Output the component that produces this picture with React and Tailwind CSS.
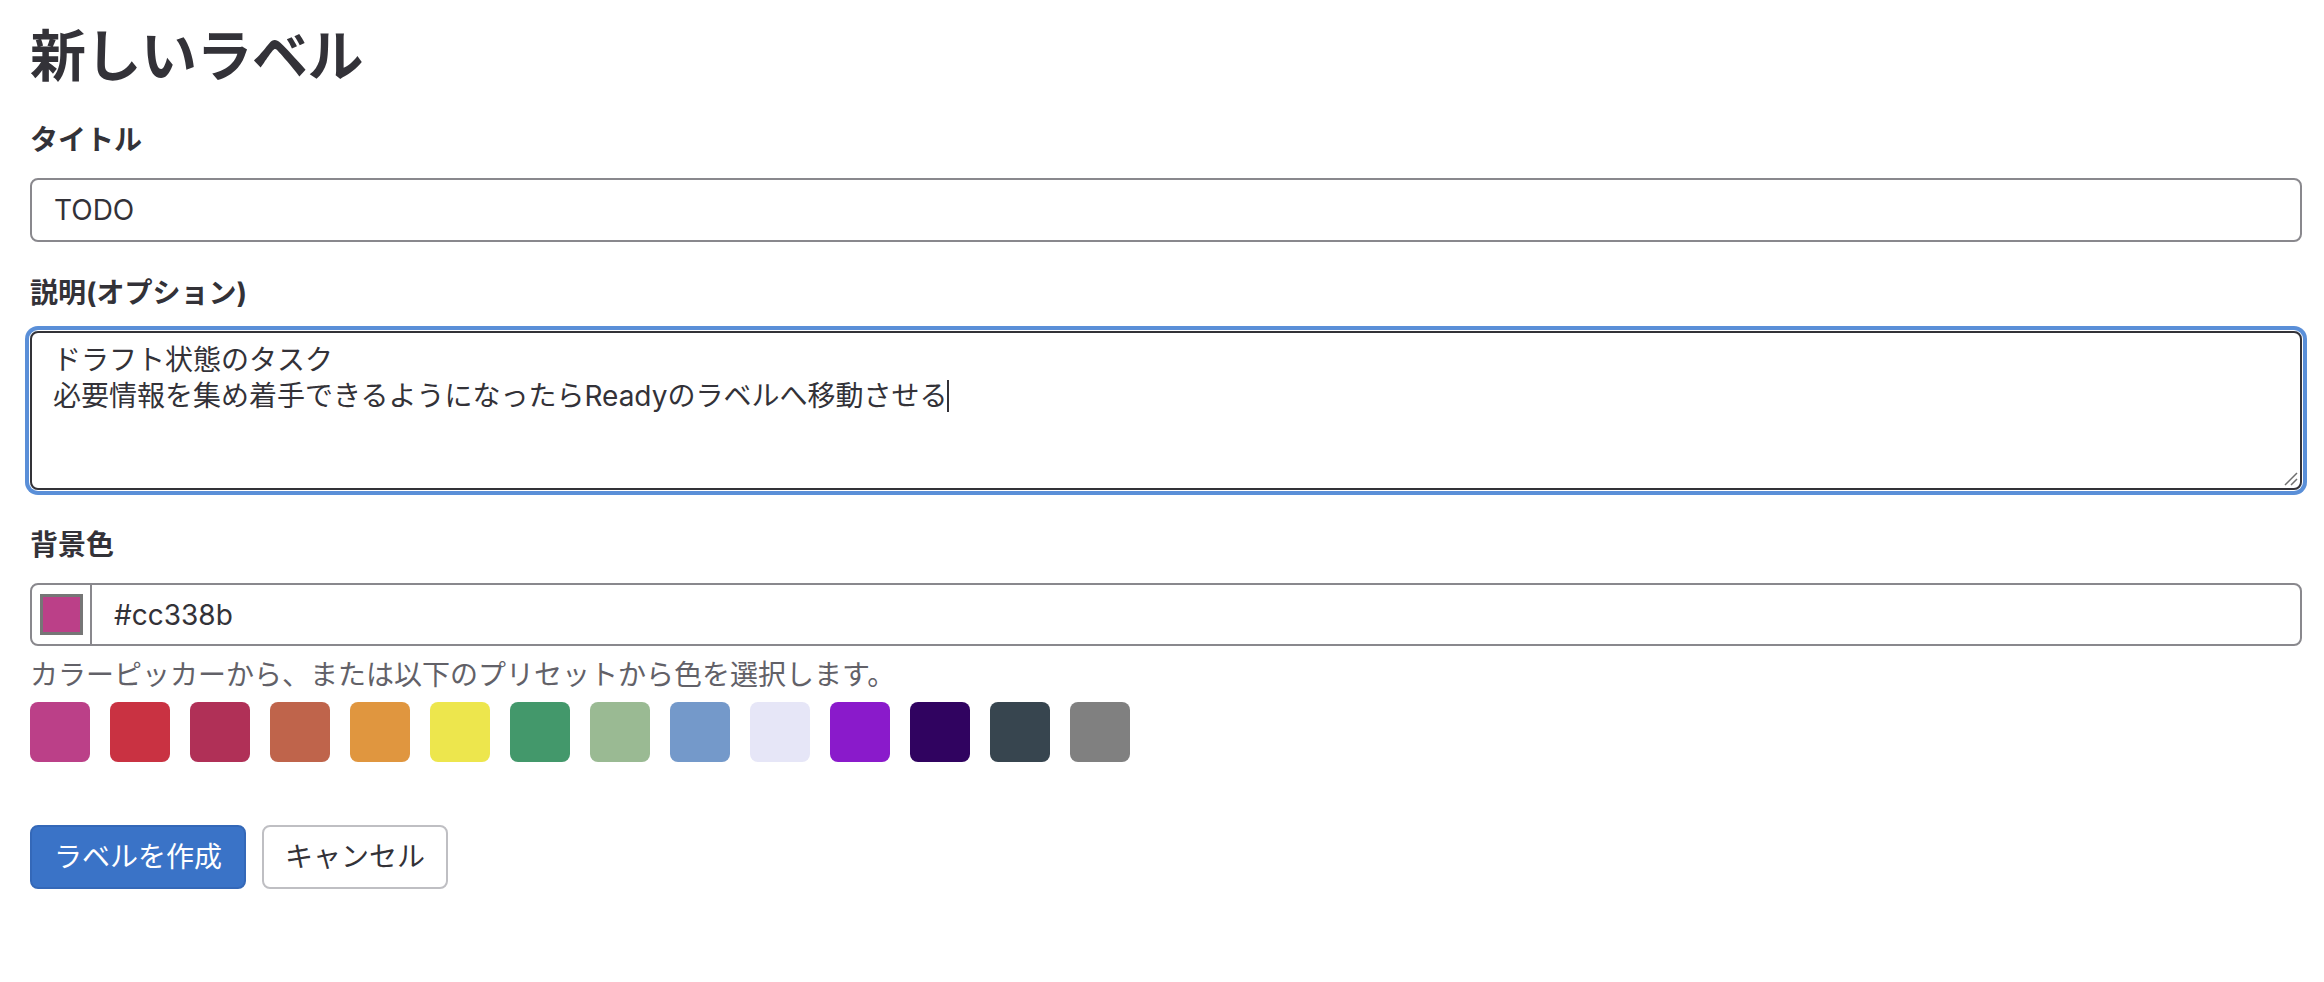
import React, { useState } from 'react';

const PRESETS = [
    '#bb4088', '#c93242', '#b03057', '#bf644b', '#e0963f', '#ede64d', '#43986b',
    '#9aba93', '#7499ca', '#e6e6f7', '#8a1acb', '#300360', '#37454f', '#808080',
];

const font = "font-['Inter','Noto_Sans_CJK_JP',sans-serif]";

const Label = ({ children }) => (
    <div className="h-[40px] leading-[40px] text-[28px] font-bold text-[#333238] mb-[18px]">{children}</div>
);

const App = () => {
    const [color, setColor] = useState('#cc338b');

    return (
        <div className={`${font} bg-white min-h-[982px] pl-[30px] pr-[22px] pt-[20px] text-[#333238]`}>
            <h1 className="h-[72px] leading-[72px] text-[56px] font-bold tracking-[-0.5px]">新しいラベル</h1>

            <div className="mt-[28px]">
                <Label>タイトル</Label>
                <div className="h-[64px] border-2 border-[#89888d] rounded-[8px] px-[22px] flex items-center text-[28px]">
                    TODO
                </div>
            </div>

            <div className="mt-[31px]">
                <Label>説明(オプション)</Label>
                <div className="relative h-[159px] border-2 border-[#333238] rounded-[8px] px-[21px] py-[9px] text-[28px] leading-[36px] shadow-[0_0_0_1px_#fff,0_0_0_5px_#5a8fd8]">
                    <div>ドラフト状態のタスク</div>
                    <div className="flex items-center">
                        必要情報を集め着手できるようになったらReadyのラベルへ移動させる
                        <span className="inline-block w-[2px] h-[32px] bg-[#333238]"></span>
                    </div>
                    {/* resize grip */}
                    <svg className="absolute right-[2px] bottom-[2px]" width="18" height="18" viewBox="0 0 18 18">
                        <path d="M17 5 L5 17 M17 11 L11 17" stroke="#6f6f6f" strokeWidth="1.5" fill="none" />
                    </svg>
                </div>
            </div>

            <div className="mt-[35px]">
                <Label>背景色</Label>
                <div className="h-[63px] border-2 border-[#89888d] rounded-[8px] flex items-stretch text-[28px]">
                    <div className="w-[60px] border-r-2 border-[#89888d] flex items-center justify-center">
                        <div className="w-[43px] h-[41px] border-[3px] border-[#767676]" style={{ backgroundColor: PRESETS[0] }}></div>
                    </div>
                    <div className="flex items-center pl-[22px]">{color}</div>
                </div>
                <div className="mt-[9px] h-[40px] leading-[40px] text-[28px] text-[#626168]">
                    カラーピッカーから、または以下のプリセットから色を選択します。
                </div>
                <div className="mt-[7px] flex gap-[20px]">
                    {PRESETS.map((c) => (
                        <button
                            key={c}
                            onClick={() => setColor(c)}
                            className="w-[60px] h-[60px] rounded-[8px]"
                            style={{ backgroundColor: c }}
                        />
                    ))}
                </div>
            </div>

            <div className="mt-[63px] flex gap-[16px]">
                <button className="h-[64px] w-[216px] rounded-[8px] bg-[#3a73c7] border-2 border-[#3468b8] text-white text-[28px]">
                    ラベルを作成
                </button>
                <button className="h-[64px] w-[186px] rounded-[8px] bg-white border-2 border-[#bfbfc3] text-[#333238] text-[28px]">
                    キャンセル
                </button>
            </div>
        </div>
    );
};

export default App;
